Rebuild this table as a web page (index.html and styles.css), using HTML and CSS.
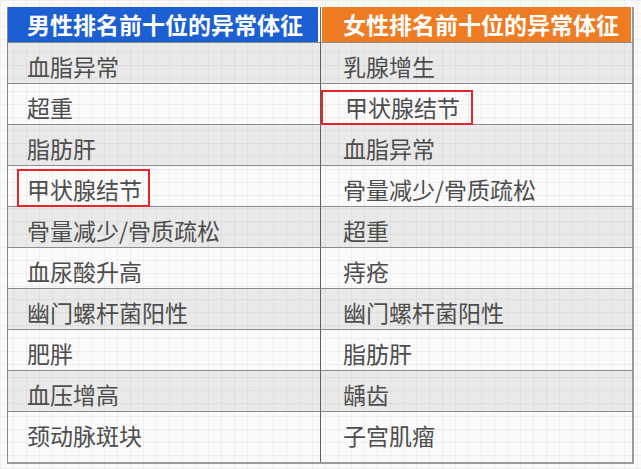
FILE: index.html
```html
<!DOCTYPE html>
<html lang="zh">
<head>
<meta charset="utf-8">
<link rel="stylesheet" href="styles.css">
</head>
<body>
<div class="page">
  <div class="table">
    <div class="cell head left"><div class="hbar blue">男性排名前十位的异常体征</div></div>
    <div class="cell head right"><div class="hbar orange">女性排名前十位的异常体征</div></div>

    <div class="cell left shade"><span>血脂异常</span></div>
    <div class="cell right shade"><span>乳腺增生</span></div>

    <div class="cell left"><span>超重</span></div>
    <div class="cell right"><span class="mark mark-r">甲状腺结节</span></div>

    <div class="cell left shade"><span>脂肪肝</span></div>
    <div class="cell right shade"><span>血脂异常</span></div>

    <div class="cell left"><span class="mark mark-l">甲状腺结节</span></div>
    <div class="cell right"><span>骨量减少/骨质疏松</span></div>

    <div class="cell left shade"><span>骨量减少/骨质疏松</span></div>
    <div class="cell right shade"><span>超重</span></div>

    <div class="cell left"><span>血尿酸升高</span></div>
    <div class="cell right"><span>痔疮</span></div>

    <div class="cell left shade"><span>幽门螺杆菌阳性</span></div>
    <div class="cell right shade"><span>幽门螺杆菌阳性</span></div>

    <div class="cell left"><span>肥胖</span></div>
    <div class="cell right"><span>脂肪肝</span></div>

    <div class="cell left shade"><span>血压增高</span></div>
    <div class="cell right shade"><span>龋齿</span></div>

    <div class="cell left last"><span>颈动脉斑块</span></div>
    <div class="cell right last"><span>子宫肌瘤</span></div>
  </div>
</div>
</body>
</html>
```

FILE: styles.css
```css
html, body {
  margin: 0;
  padding: 0;
}
body {
  width: 641px;
  height: 469px;
  overflow: hidden;
  background-color: #fafafa;
  background-image:
    repeating-linear-gradient(to right, rgba(0,0,0,0.045) 0 1px, transparent 1px 13px),
    repeating-linear-gradient(to bottom, rgba(0,0,0,0.045) 0 1px, transparent 1px 13px);
  font-family: "Noto Sans CJK SC", "Noto Sans", sans-serif;
}
.page {
  padding: 7px 0 0 7px;
}
.table {
  width: 624px;
  display: grid;
  grid-template-columns: 313px 311px;
  grid-template-rows: 35px repeat(9, 41px) 51px;
  border-left: 1px solid #8a8a8a;
  border-right: 2px solid #9a9a9a;
  border-bottom: 2px solid #9a9a9a;
}
.cell {
  display: flex;
  align-items: center;
  box-sizing: border-box;
  border-top: 1px solid #8c8c8c;
  font-size: 23px;
  line-height: 1;
  color: #4d4d4d;
  padding-top: 6px;
}
.cell.left {
  border-right: 1px solid #5e5e5e;
  padding-left: 19px;
}
.cell.right {
  padding-left: 22px;
}
.cell.shade {
  background-color: rgba(0, 0, 0, 0.065);
}
.cell.last {
  padding-bottom: 9px;
}
.cell.head {
  border-top: none;
  padding: 0;
  align-items: stretch;
}
.cell.head.left {
  padding-right: 2px;
  border-right: 1px solid #6a6a6a;
}
.cell.head.right {
  padding-left: 1px;
  padding-right: 1px;
}
.hbar {
  flex: 1;
  display: flex;
  align-items: center;
  color: #ffffff;
  font-size: 23px;
  font-weight: 700;
}
.hbar.blue {
  background: #1b5fd2;
  padding-left: 19px;
}
.hbar.orange {
  background: #ef7b22;
  padding-left: 21px;
}
.mark {
  position: relative;
}
.mark::after {
  content: "";
  position: absolute;
  border: 2px solid #e8232b;
}
.mark-l::after {
  left: -10px;
  right: -8px;
  top: -9px;
  bottom: -6px;
}
.mark-r {
  margin-left: 2px;
}
.mark-r::after {
  left: -24px;
  right: -13px;
  top: -6px;
  bottom: -6px;
}
```
